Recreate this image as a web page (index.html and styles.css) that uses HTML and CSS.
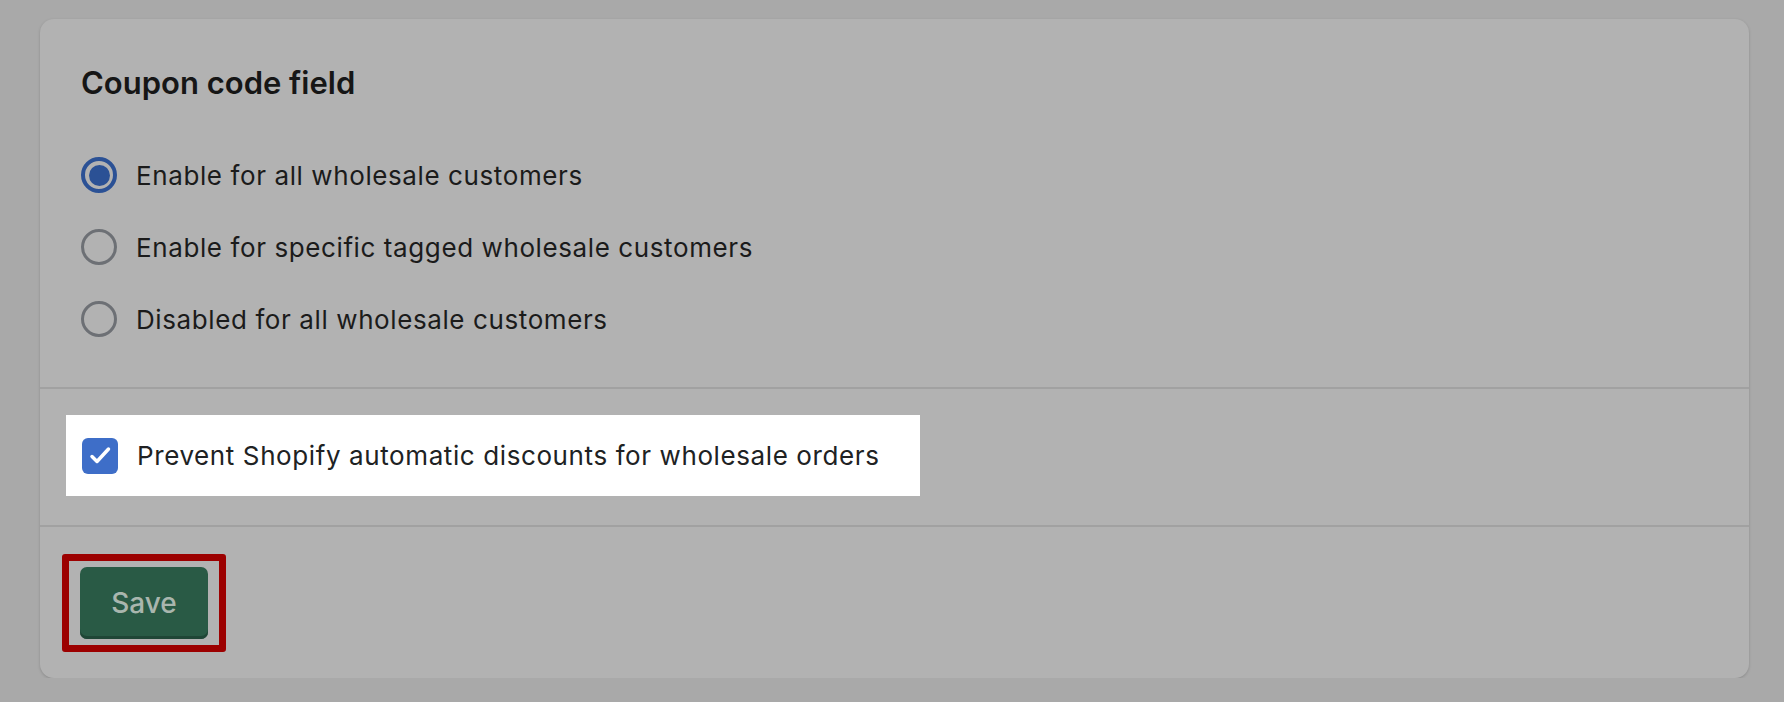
FILE: index.html
```html
<!DOCTYPE html>
<html lang="en-US">
<head>
	<meta charset="utf-8">
	<title>Coupon code field</title>
	<link rel="stylesheet" href="styles.css">
</head>
<body>
	<div class="card">
		<div class="section options">
			<h2 class="cardTitle">Coupon code field</h2>
			<div class="radioList">
				<label class="choice"><span class="radio checked"></span><span class="choiceLabel">Enable for all wholesale customers</span></label>
				<label class="choice"><span class="radio"></span><span class="choiceLabel">Enable for specific tagged wholesale customers</span></label>
				<label class="choice"><span class="radio"></span><span class="choiceLabel">Disabled for all wholesale customers</span></label>
			</div>
		</div>
		<div class="section discounts">
			<div class="highlight">
				<span class="checkbox">
					<svg width="36" height="36" viewBox="0 0 36 36"><path d="M10 18.5 L15 23.5 L26.5 11" fill="none" stroke="#fff" stroke-width="3.5" stroke-linecap="round" stroke-linejoin="round"/></svg>
				</span>
				<span class="choiceLabel">Prevent Shopify automatic discounts for wholesale orders</span>
			</div>
		</div>
		<div class="section footer">
			<div class="marker">
				<button class="saveButton">Save</button>
			</div>
		</div>
	</div>
</body>
</html>
```

FILE: styles.css
```css
body {
	margin: 0;
	background: #a9a9a9;
	font-family: Inter, "Noto Sans", sans-serif;
	color: #1b1b1b;
}

.card {
	margin: 19px 35px 0 40px;
	height: 659px;
	box-sizing: border-box;
	background: #b2b2b2;
	border-radius: 14px;
	box-shadow: 0 1px 3px rgba(0, 0, 0, 0.18);
	display: flex;
	flex-direction: column;
}

.section + .section {
	border-top: 2px solid #a1a1a1;
}

.options {
	padding: 45px 41px 50px;
}

.cardTitle {
	margin: 0;
	font-size: 31px;
	line-height: 38px;
	font-weight: 600;
	color: #161616;
}

.radioList {
	margin-top: 55px;
	display: flex;
	flex-direction: column;
	gap: 36px;
}

.choice {
	display: flex;
	align-items: center;
	gap: 19px;
	height: 36px;
}

.choiceLabel {
	font-size: 26px;
	letter-spacing: 0.6px;
}

.radio {
	width: 36px;
	height: 36px;
	box-sizing: border-box;
	border: 3.5px solid #6d7075;
	border-radius: 50%;
	display: flex;
	align-items: center;
	justify-content: center;
}

.radio.checked {
	border: 4px solid #2b5195;
}

.radio.checked::after {
	content: "";
	width: 21px;
	height: 21px;
	border-radius: 50%;
	background: #2b5195;
}

.discounts {
	padding: 26px 26px 29px;
}

.highlight {
	display: inline-flex;
	align-items: center;
	gap: 19px;
	height: 81px;
	padding: 0 40px 0 16px;
	background: #fff;
	color: #202223;
}

.checkbox {
	width: 36px;
	height: 36px;
	border-radius: 6px;
	background: #3e6ec8;
	display: flex;
}

.footer {
	padding: 27px 22px 0;
}

.marker {
	display: inline-block;
	border: 7px solid #9c0000;
	border-radius: 3px;
	padding: 6px 11px;
}

.saveButton {
	display: block;
	width: 128px;
	height: 72px;
	border: none;
	border-radius: 7px;
	background: #295a45;
	box-shadow: inset 0 -3px 0 #1f4636;
	color: #a9b6ae;
	font-family: Inter, "Noto Sans", sans-serif;
	font-size: 28px;
	font-weight: 500;
	padding: 0;
}
```
